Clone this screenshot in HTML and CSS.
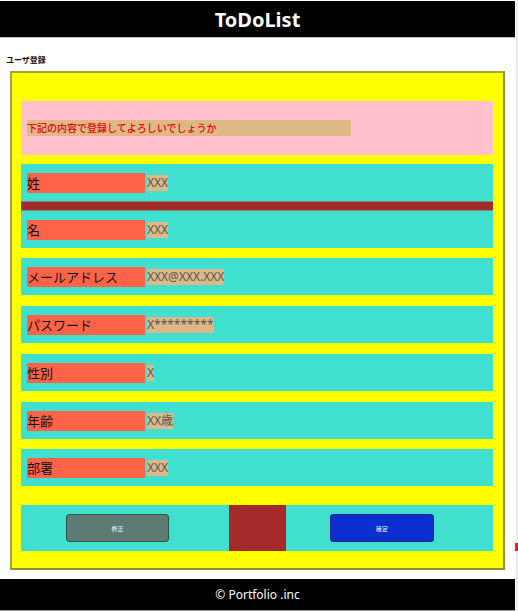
FILE: index.html
```html
<!DOCTYPE html>
<html lang="ja">
<head>
<meta charset="utf-8">
<title>ToDoList</title>
<link rel="stylesheet" href="styles.css">
</head>
<body>
<div class="page">
  <header class="header">ToDoList</header>
  <div class="title">ユーザ登録</div>
  <main class="panel">
    <div class="notice"><div class="notice-text">下記の内容で登録してよろしいでしょうか</div></div>
    <section class="block block-first">
      <div class="row"><div class="label">姓</div><div class="value">XXX</div></div>
      <div class="divider"></div>
      <div class="row"><div class="label">名</div><div class="value">XXX</div></div>
    </section>
    <section class="block gap10">
      <div class="row"><div class="label">メールアドレス</div><div class="value">XXX@XXX.XXX</div></div>
    </section>
    <section class="block gap11">
      <div class="row"><div class="label">パスワード</div><div class="value">X*********</div></div>
    </section>
    <section class="block gap11">
      <div class="row"><div class="label">性別</div><div class="value">X</div></div>
    </section>
    <section class="block gap11">
      <div class="row"><div class="label">年齢</div><div class="value">XX歳</div></div>
    </section>
    <section class="block gap10">
      <div class="row"><div class="label">部署</div><div class="value">XXX</div></div>
    </section>
    <section class="actions">
      <div class="cell"><button class="btn btn-back" type="button">修正</button></div>
      <div class="spacer"></div>
      <div class="cell cell-right"><button class="btn btn-ok" type="button">確定</button></div>
    </section>
  </main>
  <footer class="footer">© Portfolio .inc</footer>
</div>
<div class="strip"><div class="mark"></div></div>
</body>
</html>
```
FILE: styles.css
```css
html, body {
  margin: 0;
  padding: 0;
  background: #ffffff;
}
body {
  display: flex;
  font-family: "Noto Sans", "Noto Sans CJK JP", sans-serif;
}
.page {
  width: 515px;
  flex: none;
}
.header {
  margin-top: 1px;
  height: 36px;
  background: #000;
  border-bottom: 1px solid #b8b8b8;
  color: #fff;
  font-family: "Noto Sans", "Noto Sans CJK JP", sans-serif;
  font-weight: 700;
  font-size: 20px;
  display: flex;
  align-items: center;
  justify-content: center;
}
.title {
  padding: 18px 6px 0;
  height: 8px;
  line-height: 8px;
  font-size: 8px;
  font-weight: 700;
  color: #111;
  margin-bottom: 7px;
  font-family: "Noto Sans CJK JP", sans-serif;
}
.panel {
  margin: 0 10px;
  border: 2px solid #a5a53c;
  border-right-color: #8f8f38;
  border-bottom-color: #8f8f38;
  background: #ffff00;
  padding: 28px 10px 17px 9px;
}
.notice {
  background: #ffc0cb;
  height: 54px;
  box-sizing: border-box;
  padding: 19px 6px 0;
}
.notice-text {
  width: 324px;
  height: 16px;
  line-height: 16px;
  background: #deb887;
  color: #f00000;
  font-size: 10px;
  font-weight: 500;
  font-family: "Noto Sans CJK JP", sans-serif;
  white-space: nowrap;
}
.block {
  background: #40e0d0;
}
.block-first { margin-top: 9px; }
.gap10 { margin-top: 10px; }
.gap11 { margin-top: 11px; }
.row {
  height: 37px;
  box-sizing: border-box;
  padding: 9px 6px 8px;
  display: flex;
  align-items: center;
  gap: 2px;
}
.label {
  width: 118px;
  height: 20px;
  line-height: 19px;
  background: #ff6347;
  color: #111;
  font-size: 13px;
  font-family: "Noto Sans CJK JP", sans-serif;
  white-space: nowrap;
}
.value {
  height: 16px;
  line-height: 16px;
  background: #deb887;
  color: #555;
  font-size: 12px;
  font-family: "Noto Sans", "Noto Sans CJK JP", sans-serif;
  white-space: nowrap;
}
.divider {
  height: 8px;
  background: #a52a2a;
  border-top: 1px solid #7d8a84;
  border-bottom: 1px solid #7d8a84;
}
.actions {
  margin-top: 19px;
  height: 46px;
  background: #40e0d0;
  display: grid;
  grid-template-columns: 208px 57px 1fr;
}
.cell {
  display: flex;
  align-items: center;
  padding-left: 45px;
}
.cell-right { padding-left: 44px; }
.spacer { background: #a52a2a; }
.btn {
  height: 28px;
  border-radius: 3px;
  color: #fff;
  font-size: 6px;
  font-family: "Noto Sans CJK JP", sans-serif;
  padding: 0;
  margin: 0;
  cursor: pointer;
}
.btn-back {
  width: 103px;
  background: #5b7b73;
  border: 1px solid #2f554e;
}
.btn-ok {
  width: 104px;
  background: #0b2ecf;
  border: 1px solid #0a238f;
}
.footer {
  margin-top: 9px;
  height: 31px;
  line-height: 31px;
  background: #000;
  border-bottom: 1px solid #9a9a9a;
  color: #fff;
  text-align: center;
  font-size: 12px;
  font-family: "Noto Sans", sans-serif;
}
.strip {
  width: 3px;
  flex: none;
  height: 611px;
  background: linear-gradient(to right, #ffffff 0, #ffffff 1px, #ececec 1px, #ececec 3px);
  display: flex;
  flex-direction: column;
}
.mark {
  margin-top: 543px;
  height: 8px;
  background: #ff1a1a;
}
```
